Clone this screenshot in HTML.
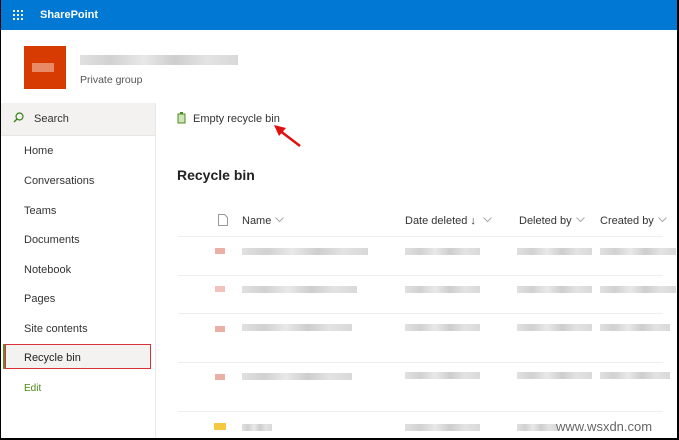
<!DOCTYPE html><html><head><style>
body{margin:0;width:679px;height:440px;overflow:hidden;font-family:"Liberation Sans",sans-serif;background:#fff;position:relative}
.a{position:absolute}
.hdr{left:0;top:0;width:679px;height:30px;background:#0078d4}
.nav{font-size:11px;color:#333;left:24px}
.blur{position:absolute;height:7px;background:linear-gradient(90deg,#ddd,#ccc 20%,#e6e6e6 40%,#c8c8c8 60%,#e0e0e0 80%,#d4d4d4);opacity:.9}
.col{font-size:11px;color:#333}
.sep{position:absolute;left:178px;right:16px;height:1px;background:#eee}
.chev{display:inline-block;width:9px;height:6px;margin-left:4px;vertical-align:1px}
</style></head><body>
<div class="a hdr"></div>
<div class="a" style="left:12px;top:9px;width:12px;height:12px;background:radial-gradient(circle,#fff 1px,transparent 1.3px) 0 0/4px 4px"></div>
<div class="a" style="left:40px;top:9px;color:#fff;font-weight:bold;font-size:11px">SharePoint</div>
<div class="a" style="left:24px;top:46px;width:42px;height:43px;background:#d83b01"></div>
<div class="a" style="left:32px;top:63px;width:22px;height:9px;background:#e88a66"></div>
<div class="blur" style="left:80px;top:55px;width:158px;height:10px"></div>
<div class="a" style="left:80px;top:74px;font-size:10.5px;color:#555">Private group</div>
<div class="a" style="left:0;top:103px;width:155px;height:32px;background:#f3f2f1"></div>
<div class="a" style="left:155px;top:103px;width:1px;height:337px;background:#e8e8e8"></div>
<svg class="a" style="left:13px;top:112px" width="11" height="11"><circle cx="6.5" cy="4.5" r="3.5" fill="none" stroke="#3a7f1a" stroke-width="1.2"/><line x1="4" y1="7" x2="1" y2="10" stroke="#3a7f1a" stroke-width="1.4"/></svg>
<div class="a" style="left:34px;top:113px;font-size:11px;color:#333">Search</div>
<div class="a" style="left:0;top:135px;width:155px;height:1px;background:#e6e6e6"></div>
<div class="a nav" style="top:145px">Home</div>
<div class="a nav" style="top:175px">Conversations</div>
<div class="a nav" style="top:205px">Teams</div>
<div class="a nav" style="top:234px">Documents</div>
<div class="a nav" style="top:264px">Notebook</div>
<div class="a nav" style="top:293px">Pages</div>
<div class="a nav" style="top:323px">Site contents</div>
<div class="a" style="left:5px;top:344px;width:144px;height:23px;background:#f3f2f1;border:1px solid #d9303a"></div>
<div class="a" style="left:3px;top:344px;width:2px;height:25px;background:#5a8f2a"></div>
<div class="a nav" style="top:352px;color:#222">Recycle bin</div>
<div class="a nav" style="top:383px;color:#4a8a16;font-size:10px">Edit</div>
<svg class="a" style="left:177px;top:112px" width="9" height="12"><rect x="1" y="2" width="7" height="9" fill="#cfe3b8" stroke="#4e8b23"/><rect x="3" y="0" width="3" height="2" fill="#4e8b23"/></svg>
<div class="a" style="left:193px;top:113px;font-size:11px;color:#333">Empty recycle bin</div>
<svg class="a" style="left:270px;top:122px" width="34" height="28"><line x1="30" y1="24" x2="9" y2="8" stroke="#e01010" stroke-width="2.5"/><polygon points="4,3 16,6 9,14" fill="#e01010"/></svg>
<div class="a" style="left:177px;top:167px;font-size:14px;color:#222;font-weight:600">Recycle bin</div>
<svg class="a" style="left:218px;top:214px" width="10" height="12"><path d="M.5 .5h6l3 3v8h-9z" fill="none" stroke="#999"/></svg>
<div class="a col" style="left:242px;top:215px">Name<svg class="chev"><path d="M.5 .5l4 4 4-4" fill="none" stroke="#aaa"/></svg></div>
<div class="a col" style="left:405px;top:215px">Date deleted ↓<svg class="chev" style="margin-left:7px"><path d="M.5 .5l4 4 4-4" fill="none" stroke="#aaa"/></svg></div>
<div class="a col" style="left:519px;top:215px">Deleted by<svg class="chev"><path d="M.5 .5l4 4 4-4" fill="none" stroke="#aaa"/></svg></div>
<div class="a col" style="left:600px;top:215px">Created by<svg class="chev"><path d="M.5 .5l4 4 4-4" fill="none" stroke="#aaa"/></svg></div>
<div class="sep" style="top:236px"></div>
<div class="sep" style="top:275px;left:178px"></div>
<div class="sep" style="top:313px"></div>
<div class="sep" style="top:362px"></div>
<div class="sep" style="top:411px"></div>
<div class="a" style="left:215px;top:248px;width:10px;height:6px;background:#eab0a5"></div>
<div class="blur" style="left:242px;top:248px;width:126px"></div><div class="blur" style="left:405px;top:248px;width:75px"></div><div class="blur" style="left:517px;top:248px;width:75px"></div><div class="blur" style="left:600px;top:248px;width:76px"></div>
<div class="a" style="left:215px;top:286px;width:10px;height:6px;background:#f0c4bb"></div>
<div class="blur" style="left:242px;top:286px;width:115px"></div><div class="blur" style="left:405px;top:286px;width:75px"></div><div class="blur" style="left:517px;top:286px;width:75px"></div><div class="blur" style="left:600px;top:286px;width:76px"></div>
<div class="a" style="left:215px;top:326px;width:10px;height:6px;background:#eab0a5"></div>
<div class="blur" style="left:242px;top:324px;width:110px"></div><div class="blur" style="left:405px;top:324px;width:75px"></div><div class="blur" style="left:517px;top:324px;width:75px"></div><div class="blur" style="left:600px;top:324px;width:70px"></div>
<div class="a" style="left:215px;top:374px;width:10px;height:6px;background:#eab0a5"></div>
<div class="blur" style="left:242px;top:373px;width:110px"></div><div class="blur" style="left:405px;top:372px;width:75px"></div><div class="blur" style="left:517px;top:372px;width:75px"></div><div class="blur" style="left:600px;top:372px;width:70px"></div>
<div class="a" style="left:214px;top:423px;width:12px;height:7px;background:#f5c842"></div>
<div class="blur" style="left:242px;top:424px;width:30px"></div><div class="blur" style="left:405px;top:424px;width:75px"></div><div class="blur" style="left:517px;top:424px;width:40px"></div>
<div class="a" style="left:556px;top:419px;font-size:13px;color:#666">www.wsxdn.com</div>
<div class="a" style="left:0;top:0;width:1px;height:440px;background:#000"></div>
<div class="a" style="left:677px;top:0;width:2px;height:440px;background:#000"></div>
<div class="a" style="left:0;top:438px;width:679px;height:2px;background:#000"></div>
</body></html>
